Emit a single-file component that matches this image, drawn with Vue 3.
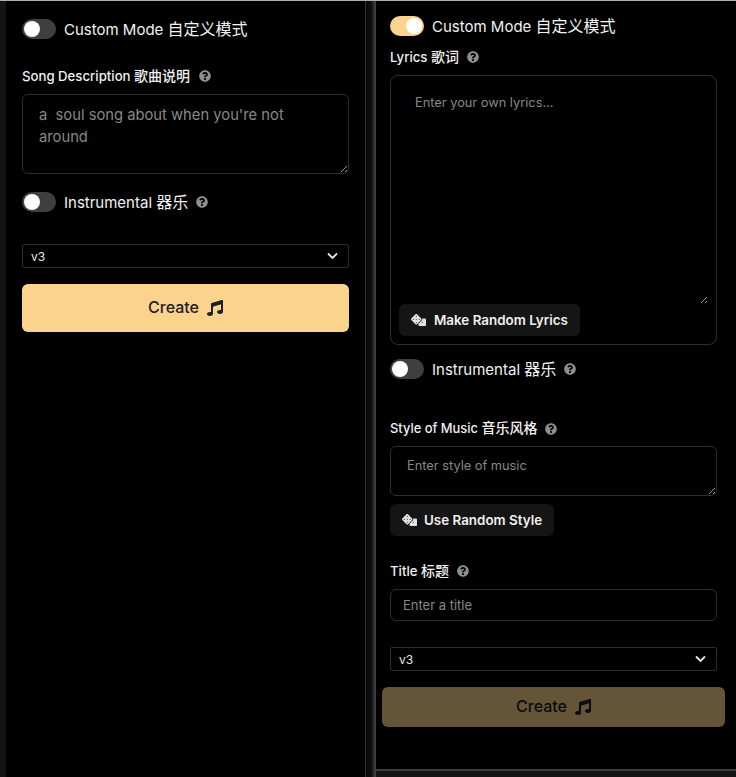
<script setup>
import { ref } from "vue";

const questionPath =
  "M504 256c0 136.997-111.043 248-248 248S8 392.997 8 256C8 119.083 119.043 8 256 8s248 111.083 248 248zM262.655 90c-54.497 0-89.255 22.957-116.549 63.758-3.536 5.286-2.353 12.415 2.715 16.258l34.699 26.31c5.205 3.947 12.621 3.008 16.665-2.122 17.864-22.658 30.113-35.797 57.303-35.797 20.429 0 45.698 13.148 45.698 32.958 0 14.976-12.363 22.667-32.534 33.976C247.128 238.528 216 254.941 216 296v4c0 6.627 5.373 12 12 12h56c6.627 0 12-5.373 12-12v-1.333c0-28.462 83.186-29.647 83.186-106.667 0-58.002-60.165-102-116.531-102zM256 338c-25.365 0-46 20.635-46 46 0 25.364 20.635 46 46 46s46-20.636 46-46c0-25.365-20.635-46-46-46z";
const musicPath =
  "M470.38 1.51L150.41 96A32 32 0 0 0 128 126.51v261.41A139 139 0 0 0 96 384c-53 0-96 28.66-96 64s43 64 96 64 96-28.66 96-64V214.32l256-75v184.61a138.4 138.4 0 0 0-32-3.93c-53 0-96 28.66-96 64s43 64 96 64 96-28.65 96-64V32a32 32 0 0 0-41.62-30.49z";
const dicePath =
  "M592 192H473.26c12.69 29.59 7.12 65.2-17 89.32L320 417.58V464c0 26.51 21.49 48 48 48h224c26.51 0 48-21.49 48-48V240c0-26.51-21.49-48-48-48zM480 376c-13.25 0-24-10.75-24-24 0-13.26 10.75-24 24-24s24 10.74 24 24c0 13.25-10.75 24-24 24zm-46.37-186.7L258.7 14.37c-19.16-19.16-50.23-19.16-69.39 0L14.37 189.3c-19.16 19.16-19.16 50.23 0 69.39L189.3 433.63c19.16 19.16 50.23 19.16 69.39 0L433.63 258.7c19.16-19.17 19.16-50.24 0-69.4zM96 248c-13.25 0-24-10.75-24-24 0-13.26 10.75-24 24-24s24 10.74 24 24c0 13.25-10.75 24-24 24zm128 128c-13.25 0-24-10.75-24-24 0-13.26 10.75-24 24-24s24 10.74 24 24c0 13.25-10.75 24-24 24zm0-128c-13.25 0-24-10.75-24-24 0-13.26 10.75-24 24-24s24 10.74 24 24c0 13.25-10.75 24-24 24zm0-128c-13.25 0-24-10.75-24-24 0-13.26 10.75-24 24-24s24 10.74 24 24c0 13.25-10.75 24-24 24zm128 128c-13.25 0-24-10.75-24-24 0-13.26 10.75-24 24-24s24 10.74 24 24c0 13.25-10.75 24-24 24z";

const chevron = "M1 1.5l4.5 4.5 4.5-4.5";
const version = ref("v3");
</script>

<template>
  <div class="page">
    <section class="panel simple">
      <div class="toggle-row">
        <span class="toggle"><span class="knob"></span></span>
        <span class="toggle-text">Custom Mode <span class="cjk">自定义模式</span></span>
      </div>

      <div class="label desc-label">
        <span>Song Description <span class="cjk">歌曲说明</span></span>
        <svg class="help" viewBox="0 0 512 512"><path :d="questionPath" /></svg>
      </div>
      <textarea class="field desc" placeholder="a  soul song about when you're not around"></textarea>

      <div class="toggle-row instrumental">
        <span class="toggle"><span class="knob"></span></span>
        <span class="toggle-text">Instrumental <span class="cjk">器乐</span></span>
        <svg class="help" viewBox="0 0 512 512"><path :d="questionPath" /></svg>
      </div>

      <div class="select-box simple-select">
        <select v-model="version">
          <option value="v3">v3</option>
        </select>
        <svg class="chevron" viewBox="0 0 11 7"><path :d="chevron" /></svg>
      </div>

      <button class="create">
        <span>Create</span>
        <svg class="music" viewBox="0 0 512 512"><path :d="musicPath" /></svg>
      </button>
    </section>

    <div class="gutter"></div>

    <section class="panel custom">
      <div class="toggle-row">
        <span class="toggle on"><span class="knob"></span></span>
        <span class="toggle-text">Custom Mode <span class="cjk">自定义模式</span></span>
      </div>

      <div class="label lyrics-label">
        <span>Lyrics <span class="cjk">歌词</span></span>
        <svg class="help" viewBox="0 0 512 512"><path :d="questionPath" /></svg>
      </div>
      <div class="lyrics-box">
        <textarea class="lyrics" placeholder="Enter your own lyrics..."></textarea>
        <button class="random">
          <svg class="dice" viewBox="0 0 640 512"><path :d="dicePath" /></svg>
          <span>Make Random Lyrics</span>
        </button>
      </div>

      <div class="toggle-row custom-instrumental">
        <span class="toggle"><span class="knob"></span></span>
        <span class="toggle-text">Instrumental <span class="cjk">器乐</span></span>
        <svg class="help" viewBox="0 0 512 512"><path :d="questionPath" /></svg>
      </div>

      <div class="label style-label">
        <span>Style of Music <span class="cjk">音乐风格</span></span>
        <svg class="help" viewBox="0 0 512 512"><path :d="questionPath" /></svg>
      </div>
      <textarea class="field style" placeholder="Enter style of music"></textarea>
      <button class="random style-random">
        <svg class="dice" viewBox="0 0 640 512"><path :d="dicePath" /></svg>
        <span>Use Random Style</span>
      </button>

      <div class="label title-label">
        <span>Title <span class="cjk">标题</span></span>
        <svg class="help" viewBox="0 0 512 512"><path :d="questionPath" /></svg>
      </div>
      <input class="field title" type="text" placeholder="Enter a title" />

      <div class="select-box custom-select">
        <select v-model="version">
          <option value="v3">v3</option>
        </select>
        <svg class="chevron" viewBox="0 0 11 7"><path :d="chevron" /></svg>
      </div>

      <button class="create disabled">
        <span>Create</span>
        <svg class="music" viewBox="0 0 512 512"><path :d="musicPath" /></svg>
      </button>
    </section>
  </div>
</template>

<style scoped>
.page {
  display: grid;
  grid-template-columns: 366px 10px 1fr;
  height: 777px;
  box-sizing: border-box;
  border-top: 1px solid #a3b5a3;
  background: #141414;
  font-family: Inter, "Noto Sans CJK SC", sans-serif;
  color: #fff;
  overflow: hidden;
}

.panel {
  background: #000;
  box-sizing: border-box;
}

.simple {
  margin-left: 6px;
  padding: 18px 16px 0;
  border-right: 1px solid #333;
}

.gutter {
  background: linear-gradient(90deg, #060606, #121212 55%, #484848);
}

.custom {
  height: 770px;
  padding: 15px 17px 0 14px;
  margin-right: 2px;
  border-bottom: 2px solid #3c3c3c;
  border-right: 1px solid #333;
  display: flex;
  flex-direction: column;
  align-items: stretch;
}

.toggle-row {
  display: flex;
  align-items: center;
  height: 20px;
}

.toggle {
  width: 34px;
  height: 20px;
  border-radius: 10px;
  background: #3f3f3f;
  display: flex;
  align-items: center;
  padding: 2px;
  box-sizing: border-box;
  flex-shrink: 0;
}

.toggle.on {
  background: #fbd38d;
  justify-content: flex-end;
}

.knob {
  width: 16px;
  height: 16px;
  border-radius: 50%;
  background: #fff;
}

.toggle-text {
  margin-left: 8px;
  padding-bottom: 2px;
  font-size: 15px;
  font-weight: 400;
  color: #f2f2f2;
}

.toggle-text .cjk {
  font-size: 16px;
}

.label {
  font-size: 13.2px;
  font-weight: 500;
  line-height: 18px;
  color: #f0f0f0;
  display: flex;
  align-items: center;
}

.label .cjk {
  font-size: 14px;
}

.help {
  width: 12px;
  height: 12px;
  fill: #8f8f8f;
  margin-left: 8px;
  flex-shrink: 0;
}

.desc-label {
  margin-top: 28px;
}

.desc-label .help {
  margin-left: 9px;
}

.field {
  display: block;
  width: 327px;
  box-sizing: border-box;
  background: #000;
  border: 1px solid #2e2e2e;
  border-radius: 6px;
  color: #fff;
  font-family: inherit;
  font-size: 13px;
  outline: none;
}

.field::placeholder,
.lyrics::placeholder {
  color: #888;
  opacity: 1;
}

.desc {
  margin-top: 9px;
  height: 80px;
  padding: 9px 16px;
  font-size: 14.75px;
  line-height: 22px;
}

.instrumental {
  margin-top: 18px;
}

.select-box {
  position: relative;
  width: 327px;
  height: 24px;
}

.simple-select {
  margin-top: 32px;
}

select {
  appearance: none;
  display: block;
  width: 100%;
  height: 100%;
  box-sizing: border-box;
  background: #000;
  color: #e8e8e8;
  border: 1px solid #2e2e2e;
  border-radius: 2px;
  padding: 0 8px;
  font-family: inherit;
  font-size: 12px;
  outline: none;
}

.chevron {
  position: absolute;
  right: 11px;
  top: 8px;
  width: 11px;
  height: 7px;
  fill: none;
  stroke: #e8e8e8;
  stroke-width: 1.8;
  pointer-events: none;
}

.create {
  display: flex;
  align-items: center;
  justify-content: center;
  width: 327px;
  height: 48px;
  margin-top: 16px;
  padding: 0 0 1px;
  border: none;
  border-radius: 6px;
  background: #fbd38d;
  color: #1a202c;
  font-family: inherit;
  font-size: 16px;
  font-weight: 500;
}

.create span {
  padding-bottom: 1px;
}

.music {
  width: 16px;
  height: 16px;
  margin-left: 8px;
  fill: #1a202c;
}

.create.disabled {
  width: 343px;
  height: 40px;
  margin-left: -8px;
  opacity: 0.4;
}

.lyrics-label {
  margin-top: 12px;
}

.lyrics-box {
  width: 327px;
  height: 270px;
  margin-top: 9px;
  padding: 8px;
  box-sizing: border-box;
  border: 1px solid #2e2e2e;
  border-radius: 8px;
}

.lyrics {
  display: block;
  width: 100%;
  height: 220px;
  box-sizing: border-box;
  padding: 8px 16px;
  background: transparent;
  border: none;
  color: #fff;
  font-family: inherit;
  font-size: 12.8px;
  line-height: 22px;
  outline: none;
}

.random {
  display: inline-flex;
  align-items: center;
  height: 32px;
  padding: 0 12px;
  border: none;
  border-radius: 6px;
  background: #151515;
  color: #f0f0f0;
  font-family: inherit;
  font-size: 13.4px;
  font-weight: 600;
}

.random span {
  padding-bottom: 1px;
}

.dice {
  width: 15px;
  height: 12px;
  margin-right: 8px;
  fill: #e2e2e2;
}

.custom-instrumental {
  margin-top: 14px;
}

.style-label {
  margin-top: 40px;
  font-size: 12.9px;
}

.style {
  margin-top: 8px;
  height: 50px;
  padding: 11px 16px;
  font-size: 12.8px;
}

.style-random {
  align-self: flex-start;
  margin-top: 8px;
}

.style-random .dice {
  margin-right: 7px;
}

.title-label {
  margin-top: 26px;
}

.title {
  margin-top: 9px;
  height: 32px;
  padding: 0 12px;
}

.custom-select {
  margin-top: 26px;
}
</style>

<style>
body {
  background: #000;
}
</style>
